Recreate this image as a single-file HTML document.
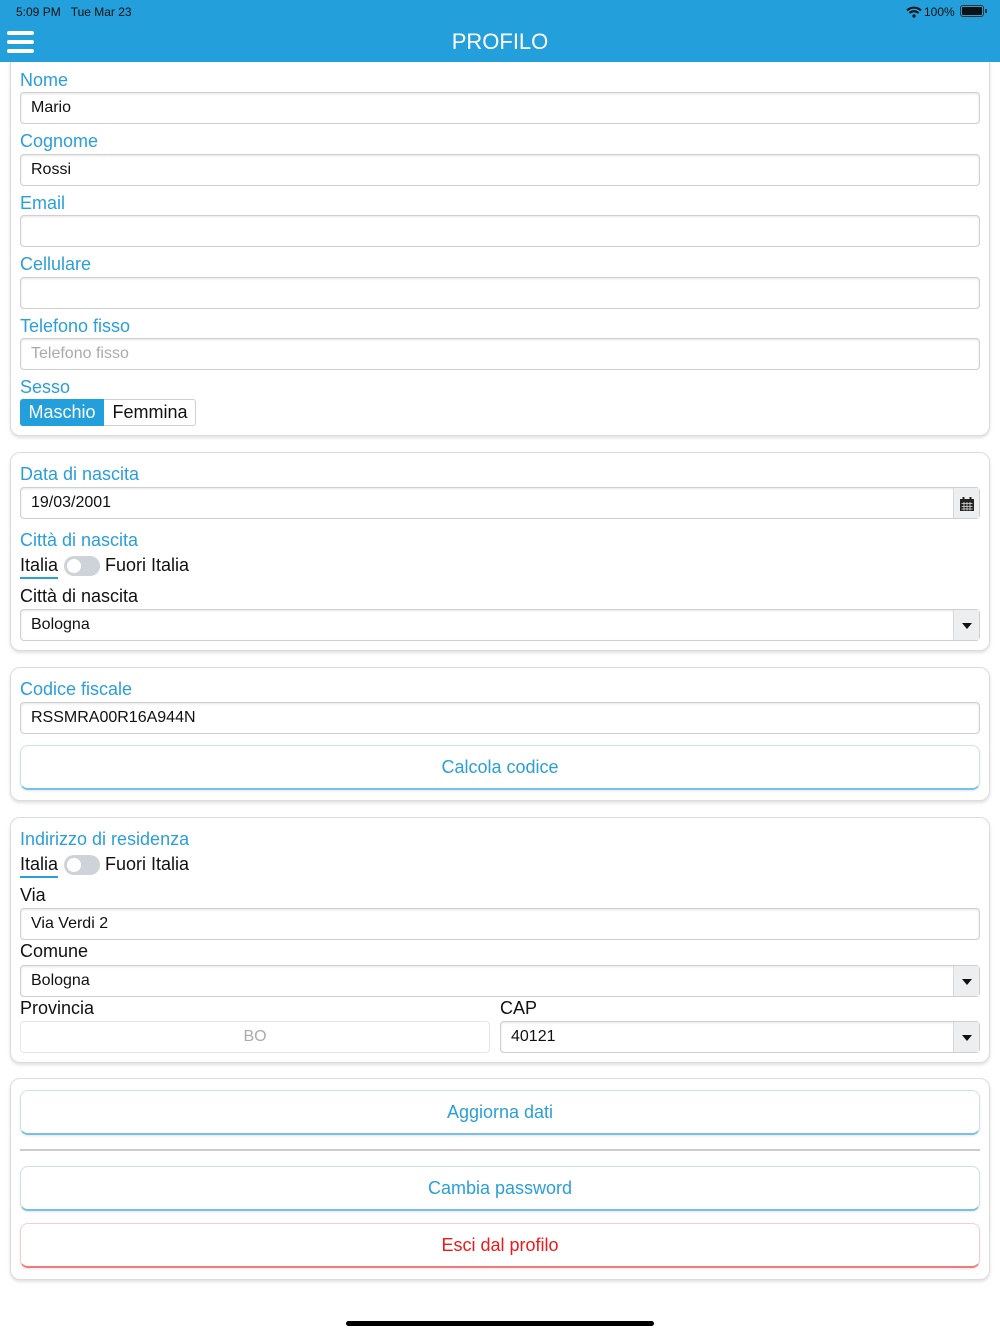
<!DOCTYPE html>
<html><head><meta charset="utf-8">
<style>
*{box-sizing:border-box;margin:0;padding:0}
body{width:1000px;height:1334px;position:relative;background:#fff;font-family:"Liberation Sans",Arial,sans-serif;overflow:hidden}
.a{position:absolute}
.hdr{left:0;top:0;width:1000px;height:62px;background:#239fdb}
.card{position:absolute;left:10px;width:980px;border:1px solid #dcdcdc;border-radius:10px;background:#fff;box-shadow:0 2px 3px rgba(0,0,0,.12)}
.lbl{position:absolute;left:20px;font-size:18px;color:#2a9fd8;line-height:22px}
.blk{position:absolute;font-size:18px;color:#111;line-height:22px}
.in{position:absolute;left:20px;width:960px;height:32px;border:1px solid #cfcfcf;border-radius:4px;box-shadow:inset 0 1px 2px rgba(0,0,0,.1);font-size:16px;color:#111;line-height:30px;padding-left:10px;background:#fff}
.dd{position:absolute;right:0;top:0;width:26px;height:30px;background:#eceef0;border-left:1px solid #d8d8d8}
.dd:after{content:"";position:absolute;left:8px;top:13px;border-left:5px solid transparent;border-right:5px solid transparent;border-top:6px solid #111}
.btn{position:absolute;left:20px;width:960px;height:45px;border:1px solid #cfe0ea;border-bottom:2px solid #79c0e6;border-radius:8px;text-align:center;font-size:18px;color:#2a9fd8;line-height:43px;background:#fff;box-shadow:0 1px 2px rgba(0,0,0,.1)}
.tog{position:absolute;left:64px;width:36px;height:20px;border-radius:10px;background:#ced3d9}
.tog:after{content:"";position:absolute;left:3px;top:3px;width:14px;height:14px;border-radius:7px;background:#fff}
.ul{position:absolute;left:20px;width:38px;height:2px;background:#2a9fd8}
</style></head><body>
<div class="card" style="top:52px;height:384px"></div>
<div class="a hdr"></div>
<div class="a" style="left:16px;top:5px;font-size:12px;color:#111">5:09 PM&nbsp;&nbsp;&nbsp;Tue Mar 23</div>
<div class="a" style="left:924px;top:5px;font-size:12px;color:#111">100%</div>
<svg class="a" style="left:906px;top:6px" width="16" height="12" viewBox="0 0 16 12"><path d="M1 4.5a10 10 0 0 1 14 0M3.5 7a6.5 6.5 0 0 1 9 0" stroke="#111" stroke-width="2" fill="none"/><circle cx="8" cy="10" r="1.6" fill="#111"/></svg>
<div class="a" style="left:960px;top:5px;width:24px;height:12px;border:1.5px solid #333;border-radius:3px;padding:1px"><div style="width:100%;height:100%;background:#111;border-radius:1px"></div></div>
<div class="a" style="left:985px;top:9px;width:2px;height:4px;background:#333"></div>
<div class="a" style="left:7px;top:31px;width:27px;height:4px;background:#fff;border-radius:2px"></div>
<div class="a" style="left:7px;top:40px;width:27px;height:4px;background:#fff;border-radius:2px"></div>
<div class="a" style="left:7px;top:49px;width:27px;height:4px;background:#fff;border-radius:2px"></div>
<div class="a" style="left:0;top:29px;width:1000px;text-align:center;color:#fff;font-size:22px">PROFILO</div>

<div class="lbl" style="top:69px">Nome</div>
<div class="in" style="top:92px">Mario</div>
<div class="lbl" style="top:130px">Cognome</div>
<div class="in" style="top:154px">Rossi</div>
<div class="lbl" style="top:192px">Email</div>
<div class="in" style="top:215px"></div>
<div class="lbl" style="top:253px">Cellulare</div>
<div class="in" style="top:277px"></div>
<div class="lbl" style="top:315px">Telefono fisso</div>
<div class="in" style="top:338px;color:#aaa">Telefono fisso</div>
<div class="lbl" style="top:376px">Sesso</div>
<div class="a" style="left:20px;top:399px;width:176px;height:27px;border:1px solid #cfcfcf;border-radius:3px"></div>
<div class="a" style="left:20px;top:399px;width:84px;height:27px;background:#239fdb;color:#fff;font-size:18px;line-height:27px;text-align:center;border-radius:3px 0 0 3px">Maschio</div>
<div class="a" style="left:104px;top:399px;width:92px;height:27px;color:#111;font-size:18px;line-height:27px;text-align:center">Femmina</div>

<div class="card" style="top:452px;height:199px"></div>
<div class="lbl" style="top:463px">Data di nascita</div>
<div class="in" style="top:487px">19/03/2001<div class="dd" style="background:#eceef0"></div></div>
<svg class="a" style="left:959px;top:496px" width="16" height="16" viewBox="0 0 16 16"><rect x="1" y="3" width="14" height="12" fill="#222"/><rect x="3.5" y="1" width="2" height="4" fill="#222"/><rect x="10.5" y="1" width="2" height="4" fill="#222"/><path d="M2.5 7.5h11M2.5 10.5h11M2.5 13h11M5 6v8.5M8 6v8.5M11 6v8.5" stroke="#ddd" stroke-width=".8"/></svg>
<div class="lbl" style="top:529px">Città di nascita</div>
<div class="blk" style="left:20px;top:554px">Italia</div>
<div class="ul" style="top:577px"></div>
<div class="tog" style="top:556px"></div>
<div class="blk" style="left:105px;top:554px">Fuori Italia</div>
<div class="blk" style="left:20px;top:585px">Città di nascita</div>
<div class="in" style="top:609px">Bologna<div class="dd"></div></div>

<div class="card" style="top:667px;height:134px"></div>
<div class="lbl" style="top:678px">Codice fiscale</div>
<div class="in" style="top:702px">RSSMRA00R16A944N</div>
<div class="btn" style="top:745px">Calcola codice</div>

<div class="card" style="top:817px;height:246px"></div>
<div class="lbl" style="top:828px">Indirizzo di residenza</div>
<div class="blk" style="left:20px;top:853px">Italia</div>
<div class="ul" style="top:876px"></div>
<div class="tog" style="top:855px"></div>
<div class="blk" style="left:105px;top:853px">Fuori Italia</div>
<div class="blk" style="left:20px;top:884px">Via</div>
<div class="in" style="top:908px">Via Verdi 2</div>
<div class="blk" style="left:20px;top:940px">Comune</div>
<div class="in" style="top:965px">Bologna<div class="dd"></div></div>
<div class="blk" style="left:20px;top:997px">Provincia</div>
<div class="blk" style="left:500px;top:997px">CAP</div>
<div class="in" style="top:1021px;width:470px;border-color:#e6e6e6;box-shadow:none;text-align:center;color:#aaa;padding:0">BO</div>
<div class="in" style="top:1021px;left:500px;width:480px">40121<div class="dd"></div></div>

<div class="card" style="top:1078px;height:202px"></div>
<div class="btn" style="top:1090px">Aggiorna dati</div>
<div class="a" style="left:20px;top:1149px;width:960px;height:2px;background:#ccc"></div>
<div class="btn" style="top:1166px">Cambia password</div>
<div class="btn" style="top:1223px;color:#f01818;border-color:#f3d0d0;border-bottom-color:#f27a7a">Esci dal profilo</div>

<div class="a" style="left:346px;top:1321px;width:308px;height:5px;border-radius:3px;background:#000"></div>
</body></html>
